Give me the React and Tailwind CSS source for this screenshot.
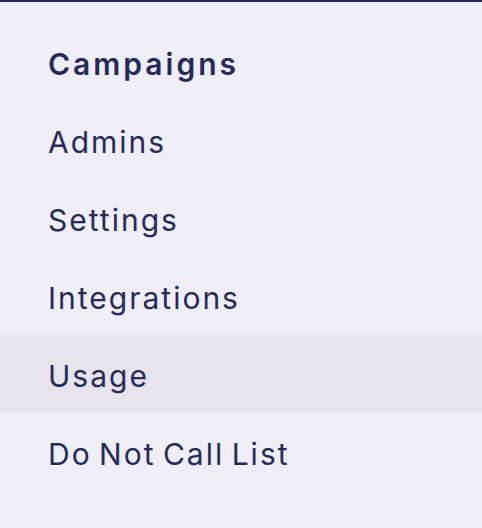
export default function App() {
  const items = [
    { label: "Campaigns", bold: true },
    { label: "Admins" },
    { label: "Settings" },
    { label: "Integrations" },
    { label: "Usage", active: true },
    { label: "Do Not Call List" },
  ];
  return (
    <div
      className="w-[482px] h-[528px] bg-[#efedf5] border-t-2 border-[#232857] pt-[21px]"
      style={{ fontFamily: "Inter, 'Noto Sans', sans-serif" }}
    >
      {items.map((it) => (
        <div
          key={it.label}
          className={`h-[78px] flex items-center pl-[48px] pt-[4px] text-[30px] text-[#252a5a] [word-spacing:-3px] ${
            it.active ? "bg-[#e6e4ea]" : ""
          } ${it.bold ? "font-semibold tracking-[3px]" : "font-normal tracking-[2px]"}`}
        >
          {it.label}
        </div>
      ))}
    </div>
  );
}
